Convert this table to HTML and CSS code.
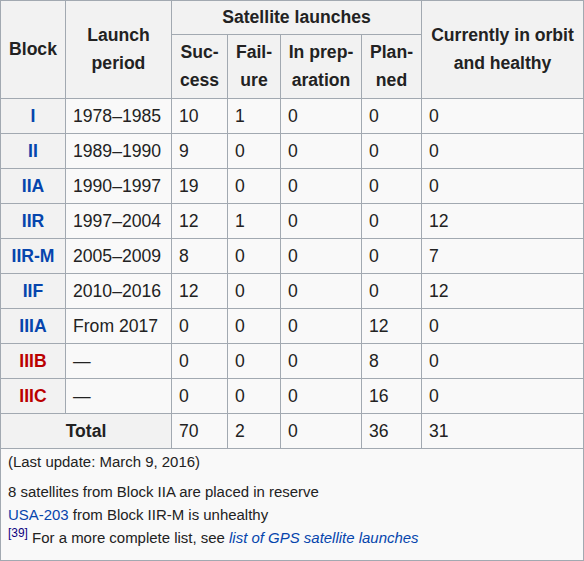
FILE: index.html
```html
<!DOCTYPE html>
<html>
<head>
<meta charset="utf-8">
<link rel="stylesheet" href="styles.css">
</head>
<body>
<table class="wikitable">
  <colgroup>
    <col class="c-block">
    <col class="c-period">
    <col class="c-succ">
    <col class="c-fail">
    <col class="c-prep">
    <col class="c-plan">
    <col class="c-orbit">
  </colgroup>
  <thead>
    <tr class="hrow1">
      <th rowspan="2">Block</th>
      <th rowspan="2">Launch<br>period</th>
      <th colspan="4">Satellite launches</th>
      <th rowspan="2">Currently in orbit<br>and healthy</th>
    </tr>
    <tr class="hrow2">
      <th>Suc-<br>cess</th>
      <th>Fail-<br>ure</th>
      <th>In prep-<br>aration</th>
      <th>Plan-<br>ned</th>
    </tr>
  </thead>
  <tbody>
    <tr><th><a class="link">I</a></th><td>1978–1985</td><td>10</td><td>1</td><td>0</td><td>0</td><td>0</td></tr>
    <tr><th><a class="link">II</a></th><td>1989–1990</td><td>9</td><td>0</td><td>0</td><td>0</td><td>0</td></tr>
    <tr><th><a class="link">IIA</a></th><td>1990–1997</td><td>19</td><td>0</td><td>0</td><td>0</td><td>0</td></tr>
    <tr><th><a class="link">IIR</a></th><td>1997–2004</td><td>12</td><td>1</td><td>0</td><td>0</td><td>12</td></tr>
    <tr><th><a class="link">IIR-M</a></th><td>2005–2009</td><td>8</td><td>0</td><td>0</td><td>0</td><td>7</td></tr>
    <tr><th><a class="link">IIF</a></th><td>2010–2016</td><td>12</td><td>0</td><td>0</td><td>0</td><td>12</td></tr>
    <tr><th><a class="link">IIIA</a></th><td>From 2017</td><td>0</td><td>0</td><td>0</td><td>12</td><td>0</td></tr>
    <tr><th><a class="redlink">IIIB</a></th><td>—</td><td>0</td><td>0</td><td>0</td><td>8</td><td>0</td></tr>
    <tr><th><a class="redlink">IIIC</a></th><td>—</td><td>0</td><td>0</td><td>0</td><td>16</td><td>0</td></tr>
    <tr><th colspan="2">Total</th><td>70</td><td>2</td><td>0</td><td>36</td><td>31</td></tr>
    <tr>
      <td colspan="7" class="foot">
        <div class="update">(Last update: March 9, 2016)</div>
        <p class="notes">8 satellites from Block IIA are placed in reserve<br><a class="link">USA-203</a> from Block IIR-M is unhealthy<br><sup class="ref">[39]</sup> For a more complete list, see <a class="link"><i>list of GPS satellite launches</i></a></p>
      </td>
    </tr>
  </tbody>
</table>
</body>
</html>
```

FILE: styles.css
```css
html, body {
  margin: 0;
  padding: 0;
  background: #ffffff;
}

.wikitable {
  width: 584px;
  border-collapse: collapse;
  table-layout: fixed;
  background: #f9f9f9;
  color: #222222;
  font-family: "Liberation Sans", Arial, sans-serif;
  font-size: 17.6px;
  line-height: 28px;
  border: 1px solid #a2a9b1;
}

.c-block { width: 65px; }
.c-period { width: 106px; }
.c-succ { width: 56px; }
.c-fail { width: 53px; }
.c-prep { width: 81px; }
.c-plan { width: 60px; }
.c-orbit { width: 162px; }

.wikitable th,
.wikitable td {
  border: 1px solid #a2a9b1;
  padding: 3px 7px;
}

.wikitable th {
  background: #f2f2f2;
  font-weight: bold;
  text-align: center;
  vertical-align: middle;
}

.wikitable td {
  text-align: left;
  vertical-align: middle;
}

.hrow1 th {
  padding-top: 2px;
}

.hrow2 th {
  padding-bottom: 4px;
}

.link {
  color: #0645ad;
  text-decoration: none;
}

.redlink {
  color: #ba0000;
  text-decoration: none;
}

.wikitable td.foot {
  font-size: 85%;
  line-height: 22.5px;
  padding: 2px 7px 3px 7px;
}

.notes {
  margin: 6px 0 8px 0;
  line-height: 23px;
}

.ref {
  color: #0b0080;
  font-size: 80%;
  line-height: 1;
  vertical-align: super;
}
```
